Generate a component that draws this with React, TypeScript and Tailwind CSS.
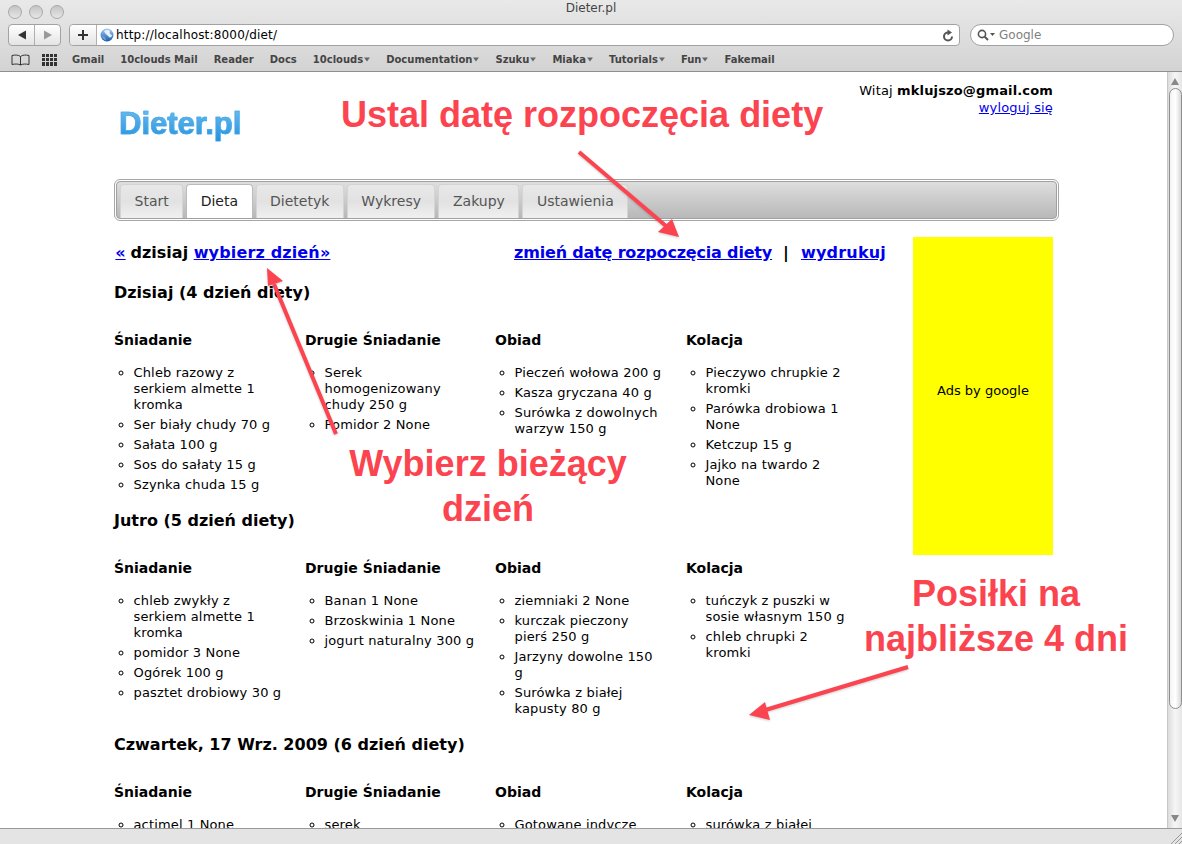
type Meal = { title: string; items: string[] }
type Day = { title: string; meals: Meal[] }

const BOOKMARKS: { label: string; menu?: boolean }[] = [
    { label: 'Gmail' },
    { label: '10clouds Mail' },
    { label: 'Reader' },
    { label: 'Docs' },
    { label: '10clouds', menu: true },
    { label: 'Documentation', menu: true },
    { label: 'Szuku', menu: true },
    { label: 'Miaka', menu: true },
    { label: 'Tutorials', menu: true },
    { label: 'Fun', menu: true },
    { label: 'Fakemail' },
]

const TABS = ['Start', 'Dieta', 'Dietetyk', 'Wykresy', 'Zakupy', 'Ustawienia']

const DAYS: Day[] = [
    {
        title: 'Dzisiaj (4 dzień diety)',
        meals: [
            {
                title: 'Śniadanie',
                items: ['Chleb razowy z serkiem almette 1 kromka', 'Ser biały chudy 70 g', 'Sałata 100 g', 'Sos do sałaty 15 g', 'Szynka chuda 15 g'],
            },
            { title: 'Drugie Śniadanie', items: ['Serek homogenizowany chudy 250 g', 'Pomidor 2 None'] },
            { title: 'Obiad', items: ['Pieczeń wołowa 200 g', 'Kasza gryczana 40 g', 'Surówka z dowolnych warzyw 150 g'] },
            { title: 'Kolacja', items: ['Pieczywo chrupkie 2 kromki', 'Parówka drobiowa 1 None', 'Ketczup 15 g', 'Jajko na twardo 2 None'] },
        ],
    },
    {
        title: 'Jutro (5 dzień diety)',
        meals: [
            {
                title: 'Śniadanie',
                items: ['chleb zwykły z serkiem almette 1 kromka', 'pomidor 3 None', 'Ogórek 100 g', 'pasztet drobiowy 30 g'],
            },
            { title: 'Drugie Śniadanie', items: ['Banan 1 None', 'Brzoskwinia 1 None', 'jogurt naturalny 300 g'] },
            { title: 'Obiad', items: ['ziemniaki 2 None', 'kurczak pieczony\npierś 250 g', 'Jarzyny dowolne 150\ng', 'Surówka z białej kapusty 80 g'] },
            { title: 'Kolacja', items: ['tuńczyk z puszki w sosie własnym 150 g', 'chleb chrupki 2 kromki'] },
        ],
    },
    {
        title: 'Czwartek, 17 Wrz. 2009 (6 dzień diety)',
        meals: [
            { title: 'Śniadanie', items: ['actimel 1 None'] },
            { title: 'Drugie Śniadanie', items: ['serek'] },
            { title: 'Obiad', items: ['Gotowane indycze'] },
            { title: 'Kolacja', items: ['surówka z białej'] },
        ],
    },
]

const TrafficLight = () => (
    <span className="w-[14px] h-[14px] rounded-full border border-[#a9a9a9] bg-gradient-to-b from-[#c4c4c4] to-[#e6e6e6]" />
)

const Globe = () => (
    <svg className="ml-[3px] my-auto shrink-0" width="14" height="14" viewBox="0 0 14 14">
        <defs>
            <linearGradient id="globe" x1="0" y1="0" x2="0" y2="1">
                <stop offset="0" stopColor="#a9cdf0" />
                <stop offset="1" stopColor="#1559b0" />
            </linearGradient>
        </defs>
        <circle cx="7" cy="7" r="6.5" fill="url(#globe)" />
        <path d="M4 3 C6 1.5 9 1.5 10 3 C9 5 10 6.5 12 7 C12 9 10 10 9 9 C8 7 5 6 4 3 Z" fill="#e8f1fa" />
        <path d="M2 8 C4 8 6 10 6 12.5 C4 12 2.5 10 2 8 Z" fill="#6ea3dc" />
    </svg>
)

const Toolbar = () => (
    <div className="h-[26px] flex items-center pl-[8px] pr-[8px]">
        <div className="flex w-[53px] h-[22px] border border-[#a2a2a2] rounded-[4px] bg-gradient-to-b from-white to-[#e4e4e4]">
            <div className="flex-1 flex items-center justify-center border-r border-[#b0b0b0]">
                <svg width="10" height="10" viewBox="0 0 10 10"><path d="M1 5 L9 0.5 V9.5 Z" fill="#333" /></svg>
            </div>
            <div className="flex-1 flex items-center justify-center">
                <svg width="10" height="10" viewBox="0 0 10 10"><path d="M9 5 L1 0.5 V9.5 Z" fill="#999" /></svg>
            </div>
        </div>
        <div className="ml-[8px] flex-1 h-[22px] flex border border-[#a2a2a2] rounded-[4px] bg-white">
            <div className="w-[27px] flex items-center justify-center border-r border-[#b0b0b0] rounded-l-[4px] bg-gradient-to-b from-white to-[#e4e4e4]">
                <svg width="12" height="12" viewBox="0 0 12 12"><path d="M6 1 V11 M1 6 H11" stroke="#333" strokeWidth="2" /></svg>
            </div>
            <Globe />
            <span className="ml-[2px] my-auto text-[12px] tracking-[0.18px] text-black">http://localhost:8000/diet/</span>
            <div className="ml-auto mr-[5px] my-auto">
                <svg width="12" height="13" viewBox="0 0 12 13"><path d="M10 7.5 A4 4 0 1 1 6 3.5" fill="none" stroke="#555" strokeWidth="2" /><path d="M5.5 0.5 L10 3.5 L5.5 6.5 Z" fill="#555" /></svg>
            </div>
        </div>
        <div className="ml-[10px] w-[204px] h-[22px] flex items-center border border-[#a2a2a2] rounded-full bg-white pl-[6px]">
            <svg width="19" height="12" viewBox="0 0 19 12"><circle cx="5" cy="5" r="3.6" fill="none" stroke="#555" strokeWidth="1.6" /><path d="M7.6 7.6 L11 11" stroke="#555" strokeWidth="2" /><path d="M13 4 H18 L15.5 7 Z" fill="#555" /></svg>
            <span className="ml-[3px] text-[12px] text-[#808080]">Google</span>
        </div>
    </div>
)

const BookmarksBar = () => (
    <div className="h-[23px] flex items-center pl-[11px]">
        <svg width="19" height="12" viewBox="0 0 19 12">
            <path d="M9.5 2.5 C7.5 0.8 4 0.8 1 1.5 V10.5 C4 9.8 7.5 9.8 9.5 11 C11.5 9.8 15 9.8 18 10.5 V1.5 C15 0.8 11.5 0.8 9.5 2.5 V11" fill="none" stroke="#333" strokeWidth="1" />
        </svg>
        <div className="ml-[12px] w-[15px] h-[12px] grid grid-cols-4 gap-[1px]">
            {Array.from({ length: 12 }).map((_, i) => (
                <span key={i} className="bg-[#333]" />
            ))}
        </div>
        <div className="ml-[15px] flex gap-[16px] text-[10px] font-semibold text-[#444]">
            {BOOKMARKS.map((b) => (
                <span key={b.label} className="flex items-center gap-[1px]">
                    {b.label}
                    {b.menu && <svg width="6" height="5" viewBox="0 0 7 6"><path d="M0 0.5 H7 L3.5 5.5 Z" fill="#666" /></svg>}
                </span>
            ))}
        </div>
    </div>
)

const BrowserChrome = () => (
    <div className="shrink-0 h-[72px] bg-gradient-to-b from-[#e9e9e9] to-[#d3d3d3] border-b border-[#8f8f8f]">
        <div className="h-[22px] relative flex items-center pl-[8px] pt-[1px] gap-[7px]">
            <TrafficLight />
            <TrafficLight />
            <TrafficLight />
            <span className="absolute inset-x-0 top-0 leading-[16px] text-center text-[12px] text-[#444]">Dieter.pl</span>
        </div>
        <Toolbar />
        <BookmarksBar />
    </div>
)

const Scrollbar = () => (
    <div className="w-[15px] shrink-0 flex flex-col items-center border-l border-[#c8c8c8] bg-gradient-to-r from-[#dcdcdc] via-[#f6f6f6] to-[#e6e6e6]">
        <svg className="mt-[6px]" width="8" height="7" viewBox="0 0 8 7"><path d="M4 0 L8 7 H0 Z" fill="#888" /></svg>
        <div className="mt-[3px] w-[13px] h-[621px] rounded-full border border-[#8e8e8e] bg-gradient-to-r from-[#f4f4f4] via-white to-[#d8d8d8]" />
        <svg className="mt-auto mb-[6px]" width="8" height="7" viewBox="0 0 8 7"><path d="M4 7 L8 0 H0 Z" fill="#888" /></svg>
    </div>
)

const Tabs = () => (
    <div className="mt-[44px] w-[945px] h-[42px] p-[1px] border border-[#a6a6a6] rounded-[6px] bg-white">
        <div className="h-full flex items-end gap-[3px] pl-[3px] border border-[#a0a0a0] rounded-[4px] bg-gradient-to-b from-[#dedede] to-[#b8b8b8]">
            {TABS.map((tab, i) => (
                <div
                    key={tab}
                    className={`h-[34px] px-[13.5px] flex items-center rounded-t-[4px] text-[14px] border-x border-t ${
                        i === 1
                            ? 'bg-white text-[#222] border-[#bbb]'
                            : 'bg-gradient-to-b from-[#e8e8e8] via-[#e2e2e2] to-[#f0f0f0] text-[#555] border-[#d4d4d4]'
                    }`}
                >
                    {tab}
                </div>
            ))}
        </div>
    </div>
)

const DaySection = ({ day }: { day: Day }) => (
    <section className="mt-[14px]">
        <h2 className="text-[16px] leading-[20px] font-bold text-black">{day.title}</h2>
        <div className="mt-[27px] grid grid-cols-[191px_190px_191px_190px]">
            {day.meals.map((meal) => (
                <div key={meal.title} className="pr-[20px]">
                    <h3 className="text-[14px] leading-[20px] font-bold text-black">{meal.title}</h3>
                    <ul className="mt-[15px] pl-[19.5px] list-[circle] text-[13px] leading-[16px] tracking-[0.15px] text-black">
                        {meal.items.map((item) => (
                            <li key={item} className="mb-[4px] whitespace-pre-line">
                                {item}
                            </li>
                        ))}
                    </ul>
                </div>
            ))}
        </div>
    </section>
)

const Annotations = () => (
    <>
        <svg className="absolute inset-0 pointer-events-none drop-shadow-[0_1px_1px_rgba(0,0,0,0.2)]" width="1182" height="844" viewBox="0 0 1182 844">
            <g stroke="#fb4450" strokeWidth="4">
                <line x1="579" y1="152" x2="666" y2="226" />
                <line x1="336" y1="434" x2="274" y2="284" />
                <line x1="908" y1="667" x2="762" y2="711" />
            </g>
            <g fill="#fb4450">
                <path d="M679 237 L658 232 L672 219 Z" />
                <path d="M267 268 L283 281 L268 286 Z" />
                <path d="M749 715 L765 702 L770 720 Z" />
            </g>
        </svg>
        <div className="absolute left-[341px] top-[93px] text-[36px] leading-[44px] font-bold text-[#fb4450] whitespace-nowrap font-['Liberation_Sans',sans-serif]">
            Ustal datę rozpoczęcia diety
        </div>
        <div className="absolute left-[330px] top-[441px] w-[316px] text-center text-[36px] leading-[45px] font-bold text-[#fb4450] font-['Liberation_Sans',sans-serif]">
            Wybierz bieżący dzień
        </div>
        <div className="absolute left-[846px] top-[571px] w-[300px] text-center text-[36px] leading-[45px] font-bold text-[#fb4450] font-['Liberation_Sans',sans-serif]">
            Posiłki na najbliższe 4 dni
        </div>
    </>
)

export default function App() {
    return (
        <div className="relative w-[1182px] h-[844px] overflow-hidden flex flex-col bg-white font-['DejaVu_Sans',sans-serif]">
            <BrowserChrome />
            <div className="flex-1 min-h-0 flex">
                <div className="flex-1 min-w-0 overflow-hidden pl-[114px]">
                    <div className="w-[939px] relative">
                        <div className="absolute right-0 top-[10px] text-right text-[13px] leading-[17px] tracking-[0.15px] text-black">
                            <div>
                                Witaj <b>mklujszo@gmail.com</b>
                            </div>
                            <a className="text-[#0000ee] underline">wyloguj się</a>
                        </div>
                        <div className="pt-[34px] pl-[5px] h-[63px]">
                            <span className="block w-fit text-[31px] leading-[36px] font-bold bg-gradient-to-b from-[#6cc0f0] to-[#1b8fdc] bg-clip-text text-transparent [-webkit-text-stroke:0.6px_#3fa6e8] font-['Liberation_Sans',sans-serif]">
                                Dieter.pl
                            </span>
                        </div>
                    </div>
                    <Tabs />
                    <div className="mt-[16px] flex w-[939px]">
                        <div className="w-[772px]">
                            <div className="mt-[6px] mb-[20px] flex justify-between text-[16px] leading-[20px] font-bold text-black">
                                <div>
                                    <a className="inline-block w-[13px] -mr-[2px] text-center text-[#0000ee] underline">«</a> dzisiaj{' '}
                                    <a className="tracking-[0.15px] text-[#0000ee] underline">wybierz dzień»</a>
                                </div>
                                <div>
                                    <a className="tracking-[-0.18px] text-[#0000ee] underline">zmień datę rozpoczęcia diety</a>
                                    <span className="ml-[11px] mr-[12px]">|</span>
                                    <a className="tracking-[0.2px] text-[#0000ee] underline">wydrukuj</a>
                                </div>
                            </div>
                            {DAYS.map((day) => (
                                <DaySection key={day.title} day={day} />
                            ))}
                        </div>
                        <div className="ml-[27px] w-[140px] h-[318px] shrink-0 flex items-center justify-center pb-[10px] bg-[#ffff00] text-[13px] text-black">
                            Ads by google
                        </div>
                    </div>
                </div>
                <Scrollbar />
            </div>
            <div className="shrink-0 h-[16px] relative bg-[#e4e4e4] border-t border-[#9a9a9a]">
                <svg className="absolute right-0 bottom-0" width="12" height="12" viewBox="0 0 12 12">
                    <path d="M1 12 L12 1 M5 12 L12 5 M9 12 L12 9" stroke="#999" strokeWidth="1" />
                </svg>
            </div>
            <Annotations />
        </div>
    )
}
